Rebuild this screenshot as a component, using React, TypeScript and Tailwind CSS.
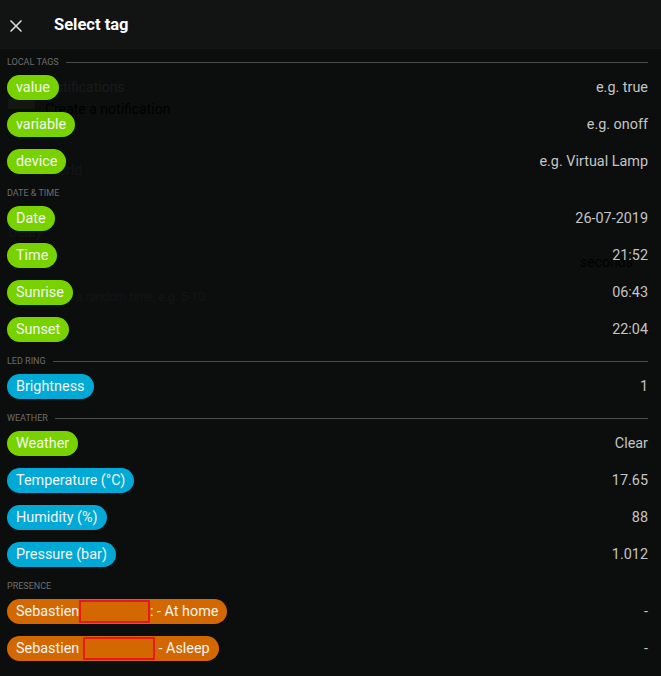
import { X } from "lucide-react";

type Tone = "green" | "blue" | "orange";

type Tag = { label: React.ReactNode; value: string; tone: Tone };

const toneClass: Record<Tone, string> = {
  green: "bg-[#77d200]",
  blue: "bg-[#00a9d6]",
  orange: "bg-[#d46800]",
};

const Redacted = ({ w }: { w: string }) => (
  <span className={`inline-block h-[23px] ${w} border-2 border-[#e8191c] bg-[#d46800] align-middle`} />
);

const sections: { title: string; line: boolean; tags: Tag[] }[] = [
  {
    title: "Local tags",
    line: true,
    tags: [
      { label: "value", value: "e.g. true", tone: "green" },
      { label: "variable", value: "e.g. onoff", tone: "green" },
      { label: "device", value: "e.g. Virtual Lamp", tone: "green" },
    ],
  },
  {
    title: "Date & Time",
    line: false,
    tags: [
      { label: "Date", value: "26-07-2019", tone: "green" },
      { label: "Time", value: "21:52", tone: "green" },
      { label: "Sunrise", value: "06:43", tone: "green" },
      { label: "Sunset", value: "22:04", tone: "green" },
    ],
  },
  {
    title: "LED Ring",
    line: true,
    tags: [{ label: "Brightness", value: "1", tone: "blue" }],
  },
  {
    title: "Weather",
    line: true,
    tags: [
      { label: "Weather", value: "Clear", tone: "green" },
      { label: "Temperature (°C)", value: "17.65", tone: "blue" },
      { label: "Humidity (%)", value: "88", tone: "blue" },
      { label: "Pressure (bar)", value: "1.012", tone: "blue" },
    ],
  },
  {
    title: "Presence",
    line: false,
    tags: [
      {
        label: (
          <>
            Sebastien <Redacted w="w-[71px] -ml-[4px]" />
            <span>: - At home</span>
          </>
        ),
        value: "-",
        tone: "orange",
      },
      {
        label: (
          <>
            Sebastien <Redacted w="w-[72px]" /> - Asleep
          </>
        ),
        value: "-",
        tone: "orange",
      },
    ],
  },
  {
    title: "Notifications",
    line: false,
    tags: [],
  },
];

export default function App() {
  return (
    <div
      className="relative h-[676px] w-[661px] overflow-hidden bg-[#0c0e0e] text-white"
      style={{ fontFamily: "Roboto, 'Liberation Sans', sans-serif" }}
    >
      {/* ── Faint text of the page beneath the sheet ── */}
      <div aria-hidden className="pointer-events-none absolute inset-0 text-[14px]">
        <span className="absolute left-[45px] top-[77px] text-[#191b1b]">Notifications</span>
        <span className="absolute left-[8px] top-[99px] h-[10px] w-[27px] bg-[#141610]" />
        <span className="absolute left-[45px] top-[99px] text-black">Create a notification</span>
        <span className="absolute left-[12px] top-[160px] text-[#131515]">Hello world</span>
        <span className="absolute left-[8px] top-[222px] text-[#131515]">Delay</span>
        <span className="absolute left-[580px] top-[252px] text-black">seconds</span>
        <span className="absolute left-[62px] top-[288px] text-[12px] text-[#131515]">
          or a random time, e.g. 5-10.
        </span>
      </div>

      {/* ── Header ── */}
      <header className="relative flex h-[49px] items-center bg-[#121414] pt-[2px]">
        <X className="ml-[6px] text-[#d8d8d8]" size={20} strokeWidth={2} />
        <h1 className="ml-[28px] text-[16.5px] font-bold text-white">Select tag</h1>
      </header>

      {/* ── Tag list ── */}
      <div className="relative pl-[7px] pr-[13px]">
        {sections.map((s) => (
          <section key={s.title}>
            <div className="flex h-5 items-center pt-[7px]">
              <span className="text-[9px] uppercase leading-[9px] text-[#6c6c6c]">{s.title}</span>
              {s.line && <span className="ml-[7px] h-px flex-1 bg-[#4a4a4a]" />}
            </div>
            {s.tags.map((t, i) => (
              <div key={i} className="flex h-[37px] items-center justify-between">
                <span
                  className={`inline-flex h-[25px] items-center whitespace-pre rounded-full px-[9px] text-[14.4px] text-[#f4f4f4] ${toneClass[t.tone]}`}
                >
                  {t.label}
                </span>
                <span className="text-[14.4px] text-[#c4c4c4]">{t.value}</span>
              </div>
            ))}
          </section>
        ))}
      </div>
    </div>
  );
}
